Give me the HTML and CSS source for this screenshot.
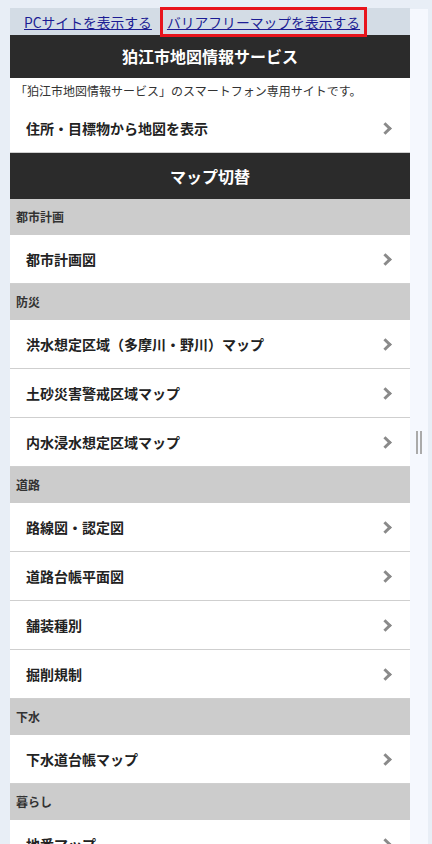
FILE: index.html
```html
<!DOCTYPE html>
<html lang="ja">
<head>
    <meta charset="UTF-8">
    <meta name="viewport" content="width=device-width, initial-scale=1.0">
    <title>狛江市地図情報サービス</title>
    <link rel="stylesheet" href="styles.css">
</head>
<body>
    <div class="layout">
        <div class="page">
            <div class="topbar">
                <a href="#" class="toplink">PCサイトを表示する</a>
                <a href="#" class="toplink marked">バリアフリーマップを表示する</a>
            </div>

            <h1 class="title">狛江市地図情報サービス</h1>
            <p class="lead">「狛江市地図情報サービス」のスマートフォン専用サイトです。</p>
            <ul class="menu">
                <li><a href="#">住所・目標物から地図を表示</a></li>
            </ul>

            <h2 class="title title-map">マップ切替</h2>

            <div class="group">都市計画</div>
            <ul class="menu">
                <li><a href="#">都市計画図</a></li>
            </ul>

            <div class="group">防災</div>
            <ul class="menu">
                <li><a href="#">洪水想定区域（多摩川・野川）マップ</a></li>
                <li><a href="#">土砂災害警戒区域マップ</a></li>
                <li><a href="#">内水浸水想定区域マップ</a></li>
            </ul>

            <div class="group">道路</div>
            <ul class="menu">
                <li><a href="#">路線図・認定図</a></li>
                <li><a href="#">道路台帳平面図</a></li>
                <li><a href="#">舗装種別</a></li>
                <li><a href="#">掘削規制</a></li>
            </ul>

            <div class="group">下水</div>
            <ul class="menu">
                <li><a href="#">下水道台帳マップ</a></li>
            </ul>

            <div class="group">暮らし</div>
            <ul class="menu">
                <li><a href="#">地番マップ</a></li>
            </ul>
        </div>

        <div class="splitter">
            <span class="handle"></span>
        </div>
    </div>
</body>
</html>
```

FILE: styles.css
```css
html, body {
    height: 100%;
    overflow: hidden;
}

body {
    margin: 0;
    padding: 8px 0 0 0;
    background-color: #e8eef6;
    font-family: "Noto Sans CJK JP", "Noto Sans", sans-serif;
    color: #222;
}

.layout {
    display: flex;
    align-items: flex-start;
    padding-left: 10px;
}

.page {
    width: 400px;
    flex-shrink: 0;
    background-color: #fff;
}

/* top links */
.topbar {
    display: flex;
    align-items: center;
    height: 27px;
    padding: 1px 0 0 14px;
    box-sizing: border-box;
    background-color: #d3dce5;
}

.toplink {
    color: #1c1c94;
    font-size: 13.8px;
    line-height: 20px;
    text-decoration: underline;
}

.marked {
    position: relative;
    display: inline-block;
    margin-left: 11px;
    padding: 2px 4px;
    outline: 3px solid #e8141c;
}

/* dark titles */
.title {
    margin: 0;
    height: 43px;
    line-height: 43px;
    background-color: #2b2b2b;
    color: #fff;
    font-size: 16px;
    font-weight: bold;
    text-align: center;
}

.title-map {
    height: 46px;
    line-height: 46px;
}

.lead {
    margin: 0;
    padding: 0 5px;
    height: 26px;
    line-height: 26px;
    font-size: 12px;
    color: #333;
}

/* list rows */
.menu {
    list-style: none;
    margin: 0;
    padding: 0;
}

.menu li {
    border-bottom: 1px solid #cfcfcf;
}

.menu a {
    display: flex;
    align-items: center;
    justify-content: space-between;
    height: 48px;
    padding: 0 17px 0 16px;
    color: #222;
    font-size: 14px;
    font-weight: bold;
    text-decoration: none;
}

.menu a::after {
    content: "";
    width: 6px;
    height: 6px;
    margin-right: 3px;
    border-top: 3px solid #8a8a8a;
    border-right: 3px solid #8a8a8a;
    transform: rotate(45deg);
}

.group {
    height: 36px;
    line-height: 36px;
    padding-left: 6px;
    background-color: #cccccc;
    color: #333;
    font-size: 12px;
    font-weight: bold;
}

/* right side panel */
.splitter {
    width: 18px;
    height: 835px;
    margin-top: 1px;
    padding-top: 31px;
    box-sizing: border-box;
    display: flex;
    align-items: center;
    justify-content: center;
    background-color: #f5f8fe;
}

.handle {
    width: 2px;
    height: 23px;
    border-left: 2px solid #aaa;
    border-right: 2px solid #aaa;
}
```
